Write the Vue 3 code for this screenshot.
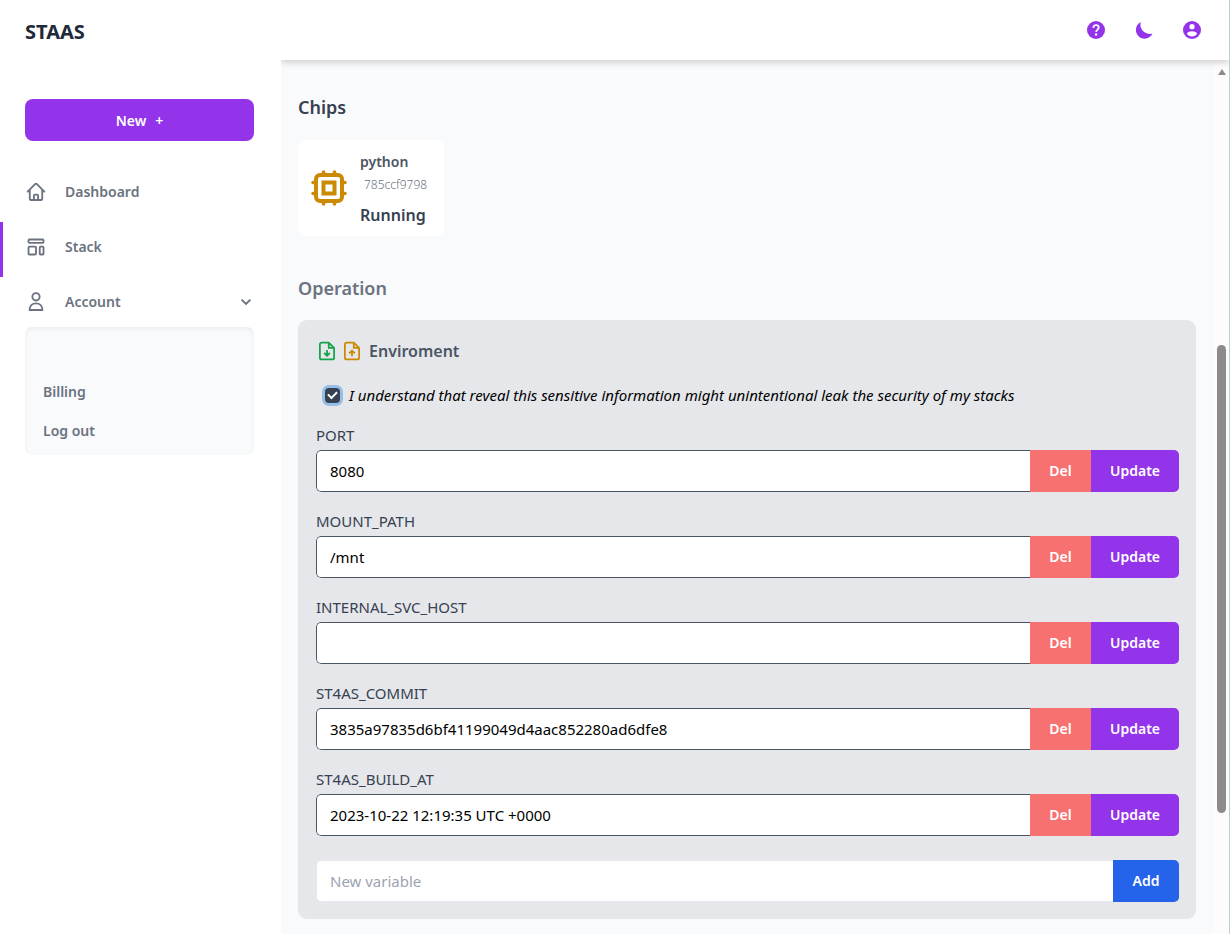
<script setup>
import { ref } from 'vue'

const revealed = ref(true)
const newVariable = ref('')
const variables = ref([
  { name: 'PORT', value: '8080' },
  { name: 'MOUNT_PATH', value: '/mnt' },
  { name: 'INTERNAL_SVC_HOST', value: '' },
  { name: 'ST4AS_COMMIT', value: '3835a97835d6bf41199049d4aac852280ad6dfe8' },
  { name: 'ST4AS_BUILD_AT', value: '2023-10-22 12:19:35 UTC +0000' }
])
</script>

<template>
  <div class="app">
    <aside class="sidebar">
      <a class="brand" href="#">STAAS</a>
      <button class="new-btn" type="button"><span>New</span><span class="plus">+</span></button>
      <nav class="nav">
        <a class="nav-item" href="#">
          <svg class="nav-icon" viewBox="0 0 24 24"><path d="M2 11.500 11.200 2.300a1.130 1.130 0 0 1 1.600 0L22 11.500M4.500 9.500v11c0 .6.5 1.100 1.100 1.100h3.900v-5.400c0-.6.5-1.100 1.100-1.100h2.800c.6 0 1.100.5 1.100 1.100v5.400h3.900c.6 0 1.100-.5 1.100-1.100v-11M9.500 21.600h5" /></svg>
          <span>Dashboard</span>
        </a>
        <a class="nav-item active" href="#">
          <svg class="nav-icon" viewBox="0 0 24 24"><rect x="3" y="3" width="18" height="4" rx="1" /><rect x="3" y="11.500" width="9" height="9.500" rx="1" /><rect x="16.500" y="11.500" width="4.500" height="9.500" rx="1" /></svg>
          <span>Stack</span>
        </a>
        <button class="nav-item" type="button">
          <svg class="nav-icon" viewBox="0 0 24 24"><circle cx="12" cy="5.800" r="4.400" /><path d="M4.300 21.600c0-5 3.300-8 7.700-8s7.700 3 7.700 8z" /></svg>
          <span>Account</span>
          <svg class="chevron" viewBox="0 0 20 20"><path d="m4.500 7 5.500 5.500L15.500 7" /></svg>
        </button>
      </nav>
      <div class="submenu">
        <a href="#">Billing</a>
        <a href="#">Log out</a>
      </div>
    </aside>

    <div class="page">
      <header class="topbar">
        <button type="button" aria-label="Help">
          <svg viewBox="0 0 20 20"><circle cx="10" cy="10" r="10" /><path class="question" d="M7 7.600c.1-2 1.300-3 3-3s3 1.100 3 2.600c0 2.300-2.800 2.400-2.800 5" /><circle class="dot" cx="10.100" cy="15" r="1.300" /></svg>
        </button>
        <button type="button" aria-label="Dark mode">
          <svg viewBox="0 0 20 20"><path d="M6.300 1C4.500 9 11 15.500 19.400 14.200 17.600 17.600 14.500 19.600 10.600 19.600 5.300 19.600 1 15.300 1 10 1 6 3.100 2.700 6.300 1z" /></svg>
        </button>
        <button class="profile" type="button" aria-label="Profile">
          <svg viewBox="0 0 20 20"><circle cx="10" cy="10" r="10" /><circle class="hole" cx="10" cy="6.300" r="2.900" /><path class="hole" d="M4.300 14.200c1.100-2 3.500-2.700 5.700-2.700s4.600.7 5.700 2.700c-1.200 1.900-3.300 3-5.700 3s-4.500-1.100-5.700-3z" /></svg>
        </button>
      </header>

      <div class="body">
        <main class="content">
          <h2 class="chips-title">Chips</h2>
          <article class="chip">
            <svg class="cpu" viewBox="0 0 36 36">
              <rect x="5" y="5" width="26" height="26" rx="4" />
              <rect x="12.500" y="12.500" width="11" height="11" />
              <path d="M12.500 4.500V2M23.500 4.500V2M12.500 34v-3M23.500 34v-3M4.500 12.500H2M4.500 23.500H2M34 12.500h-3M34 23.500h-3" />
            </svg>
            <div class="chip-text">
              <span class="chip-name">python</span>
              <span class="chip-id">785ccf9798</span>
              <span class="chip-state">Running</span>
            </div>
          </article>

          <h2 class="operation-title">Operation</h2>
          <section class="panel">
            <div class="panel-head">
              <button class="file download" type="button" aria-label="Download variables">
                <svg viewBox="0 0 18 22"><path d="M11 1.500H3a2 2 0 0 0-2 2v15a2 2 0 0 0 2 2h12a2 2 0 0 0 2-2V7.500zM11 1.500v6h6M9 10v6.500M5.800 13.200l3.200 3.200 3.200-3.200" /></svg>
              </button>
              <button class="file upload" type="button" aria-label="Upload variables">
                <svg viewBox="0 0 18 22"><path d="M11 1.500H3a2 2 0 0 0-2 2v15a2 2 0 0 0 2 2h12a2 2 0 0 0 2-2V7.500zM11 1.500v6h6M9 17v-6.500M5.800 13.700l3.200-3.200 3.200 3.200" /></svg>
              </button>
              <h3>Enviroment</h3>
            </div>
            <label class="consent">
              <input v-model="revealed" type="checkbox" />
              <span>I understand that reveal this sensitive information might unintentional leak the security of my stacks</span>
            </label>
            <form class="variables" @submit.prevent>
              <div v-for="item in variables" :key="item.name" class="variable">
                <label :for="item.name">{{ item.name }}</label>
                <div class="field">
                  <input :id="item.name" v-model="item.value" type="text" />
                  <button class="del" type="button">Del</button>
                  <button class="update" type="button">Update</button>
                </div>
              </div>
              <div class="field new-field">
                <input v-model="newVariable" type="text" placeholder="New variable" aria-label="New variable" />
                <button class="add" type="submit">Add</button>
              </div>
            </form>
          </section>
        </main>
        <div class="scrollbar" aria-hidden="true">
          <svg viewBox="0 0 10 8"><path d="M5 1 9 7H1z" /></svg>
          <div class="thumb"></div>
        </div>
      </div>
    </div>
  </div>
</template>

<style>
body {
  margin: 0;
}
</style>

<style scoped>
* {
  box-sizing: border-box;
}

.app {
  display: flex;
  height: 100vh;
  overflow: hidden;
  background: #fff;
  border-right: 1px solid #bccfd1;
  font-family: "Noto Sans", "Open Sans", sans-serif;
  font-size: 14px;
  line-height: 20px;
  color: #6b7280;
}

button,
input {
  font: inherit;
}

button {
  margin: 0;
  padding: 0;
  border: 0;
  background: none;
  color: inherit;
  cursor: pointer;
}

a {
  color: inherit;
  text-decoration: none;
}

h2,
h3 {
  margin: 0;
  font-weight: 600;
}

svg {
  display: block;
  flex: none;
}

.sidebar {
  display: flex;
  flex-direction: column;
  flex: none;
  width: 281px;
  padding: 18px 27px 0 0;
}

.brand {
  margin-left: 25px;
  font-size: 20px;
  line-height: 28px;
  font-weight: 700;
  color: #1f2937;
}

.new-btn {
  display: flex;
  align-items: center;
  justify-content: center;
  gap: 9px;
  height: 42px;
  margin: 53px 0 0 25px;
  padding-top: 2px;
  border-radius: 8px;
  background: #9333ea;
  color: #fff;
  font-weight: 600;
}

.nav {
  display: flex;
  flex-direction: column;
  margin-top: 26px;
}

.nav-item {
  display: flex;
  align-items: center;
  height: 55px;
  padding: 0 0 6px 26px;
  font-weight: 600;
  text-align: left;
}

.nav-item span {
  flex: 1;
  margin-left: 19px;
}

.nav-item.active {
  padding-left: 23px;
  border-left: 3px solid #9333ea;
  border-radius: 0 4px 4px 0;
}

.nav-icon {
  width: 20px;
  height: 20px;
  fill: none;
  stroke: currentColor;
  stroke-width: 2.2;
  stroke-linejoin: round;
  stroke-linecap: round;
}

.chevron {
  width: 16px;
  height: 16px;
  fill: none;
  stroke: currentColor;
  stroke-width: 2.4;
}

.submenu {
  display: flex;
  flex-direction: column;
  gap: 19px;
  margin: -5px 0 0 25px;
  padding: 55px 18px 14px;
  border-radius: 7px;
  background: #f9fafb;
  box-shadow: inset 0 2px 4px rgba(0, 0, 0, 0.06);
  font-weight: 600;
}

.page {
  display: flex;
  flex-direction: column;
  flex: 1;
  min-width: 0;
}

.topbar {
  display: flex;
  align-items: center;
  justify-content: flex-end;
  gap: 30px;
  flex: none;
  height: 60px;
  padding-right: 28px;
  background: #fff;
  box-shadow: 0 3px 6px rgba(0, 0, 0, 0.16);
  clip-path: inset(0 0 -12px 0);
  z-index: 1;
}

.topbar svg {
  width: 18px;
  height: 18px;
  fill: #9333ea;
}

.topbar .question {
  fill: none;
  stroke: #fff;
  stroke-width: 2;
}

.topbar .dot,
.topbar .hole {
  fill: #fff;
}

.body {
  display: flex;
  flex: 1;
  min-height: 0;
  background: #f9fafb;
}

.content {
  flex: 1;
  min-width: 0;
  padding: 33px 18px 15px 17px;
  overflow: hidden;
}

.chips-title,
.operation-title {
  font-size: 18px;
  line-height: 28px;
}

.chips-title {
  color: #374151;
}

.chip {
  display: flex;
  align-items: center;
  gap: 13px;
  width: fit-content;
  height: 96px;
  margin-top: 19px;
  padding: 0 17px 0 13px;
  border-radius: 8px;
  background: #fff;
}

.cpu {
  width: 36px;
  height: 36px;
  fill: none;
  stroke: #ca8a04;
  stroke-width: 4;
  stroke-linecap: round;
}

.cpu path {
  stroke-width: 3.6;
}

.chip-text {
  display: flex;
  flex-direction: column;
}

.chip-name {
  font-weight: 600;
  color: #4b5563;
}

.chip-id {
  margin: 3px 0 0 4px;
  font-size: 12px;
  font-weight: 300;
}

.chip-state {
  margin-top: 10px;
  font-size: 16px;
  font-weight: 600;
  color: #374151;
}

.operation-title {
  margin-top: 38px;
}

.panel {
  margin-top: 18px;
  padding: 18px 17px 17px 18px;
  border-radius: 9px;
  background: #e5e7eb;
}

.panel-head {
  display: flex;
  align-items: center;
  gap: 9px;
  height: 26px;
  padding-left: 3px;
}

.panel-head h3 {
  font-size: 16px;
  color: #4b5563;
}

.file svg {
  width: 16px;
  height: 20px;
  fill: none;
  stroke: currentColor;
  stroke-width: 2;
  stroke-linejoin: round;
}

.download {
  color: #16a34a;
}

.upload {
  color: #ca8a04;
}

.consent {
  display: flex;
  align-items: center;
  gap: 9px;
  margin-top: 21px;
  padding-left: 9px;
  font-size: 15px;
  font-style: italic;
  color: #000;
}

.consent input {
  appearance: none;
  display: grid;
  place-items: center;
  flex: none;
  width: 15px;
  height: 15px;
  margin: 0;
  border-radius: 4px;
  background: #fff;
  box-shadow: 0 0 0 3px #97bfe5;
}

.consent input:checked {
  background: #374151;
}

.consent input:checked::before {
  content: "";
  width: 7px;
  height: 4px;
  border: solid #fff;
  border-width: 0 0 2px 2px;
  transform: translateY(-1px) rotate(-45deg);
}

.variables {
  margin-top: 21px;
  font-size: 15px;
}

.variable {
  margin-bottom: 20px;
  color: #374151;
}

.variable label {
  display: block;
  line-height: 18px;
  margin-bottom: 6px;
}

.field {
  display: flex;
  height: 42px;
  border-radius: 5px;
  overflow: hidden;
}

.field input {
  flex: 1;
  min-width: 0;
  margin: 0;
  padding: 0 13px;
  border: 1px solid #4b5563;
  border-right: 0;
  border-radius: 5px 0 0 5px;
  background: #fff;
  color: #000;
  outline: none;
}

.field button {
  color: #fff;
  font-size: 14px;
  font-weight: 600;
}

.field .del {
  width: 61px;
  background: #f87171;
}

.field .update {
  width: 88px;
  background: #9333ea;
}

.field .add {
  width: 66px;
  background: #2563eb;
}

.new-field {
  margin-top: 24px;
}

.new-field input {
  border-color: #e5e7eb;
}

.new-field input::placeholder {
  color: #9ca3af;
  opacity: 1;
}

.scrollbar {
  display: flex;
  flex-direction: column;
  align-items: center;
  flex: none;
  width: 15px;
  padding-top: 8px;
  background: #fcfcfc;
}

.scrollbar svg {
  width: 10px;
  height: 8px;
  fill: #8b8b8b;
}

.thumb {
  width: 9px;
  height: 54%;
  margin-top: 269px;
  border-radius: 5px;
  background: #8b8b8b;
}
</style>
